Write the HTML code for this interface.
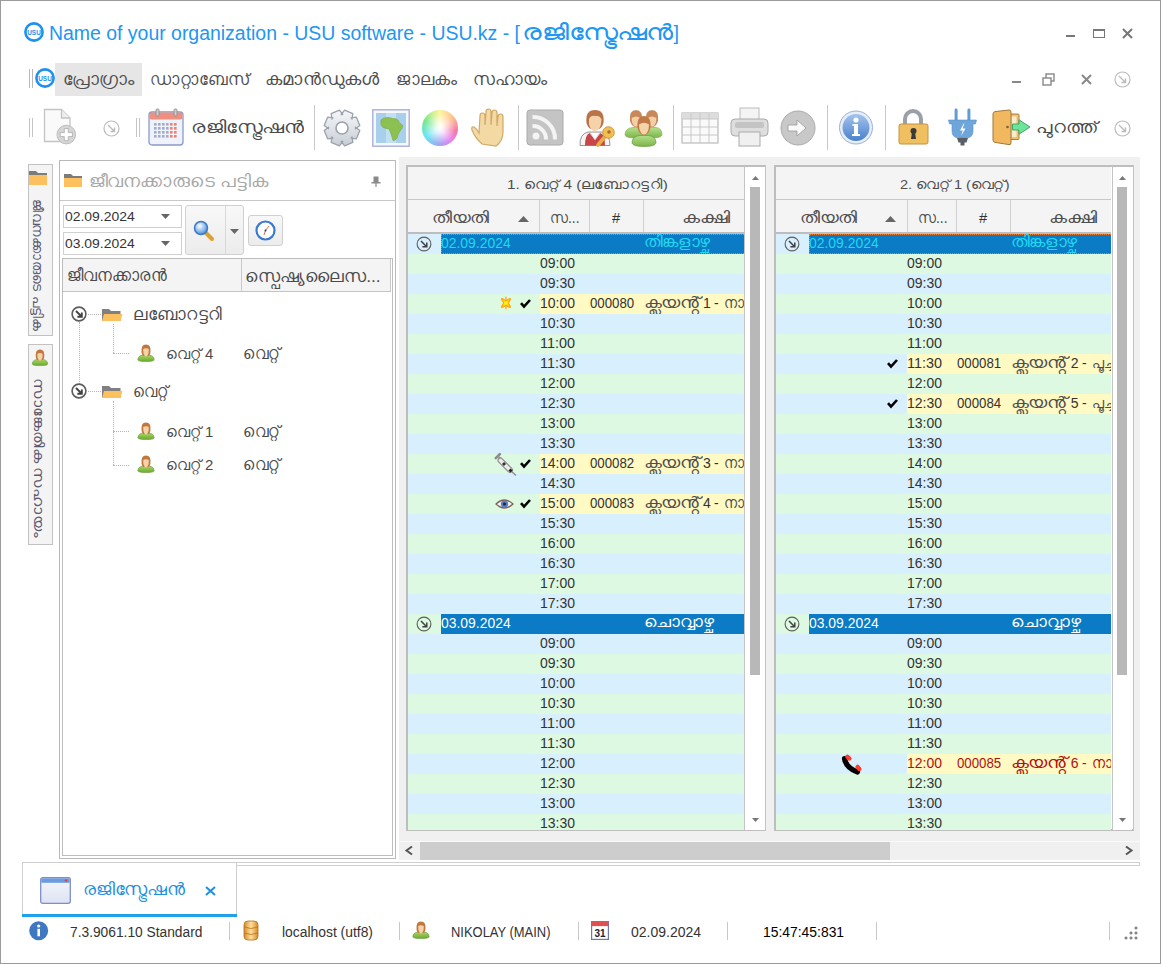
<!DOCTYPE html>
<html><head><meta charset="utf-8"><title>USU</title>
<style>
html,body{margin:0;padding:0;width:1161px;height:964px;overflow:hidden;background:#fff}
body{position:relative;font-family:'Liberation Sans',sans-serif;color:#222}
svg{overflow:visible}
</style></head><body>
<div style="position:absolute;left:0px;top:0px;width:1159px;height:962px;border:1px solid #9b9b9b;background:#fff"></div><svg style="position:absolute;left:24px;top:22px" width="20" height="20" viewBox="0 0 20 20"><circle cx="10" cy="10" r="8.6" fill="#fff" stroke="#1e90f0" stroke-width="2.6"/><text x="3.2" y="12.7" font-family="Liberation Sans" font-weight="bold" font-size="7.6" fill="#1e90f0" textLength="13.6" lengthAdjust="spacingAndGlyphs">USU</text></svg><div style="position:absolute;left:49px;top:23.07px;font-size:20px;line-height:20px;white-space:nowrap;color:#2196f3;transform:scale(0.9719,1.0);transform-origin:0 16.93px;">Name of your organization - USU software - USU.kz - [</div><div style="position:absolute;left:522px;top:23.92px;font-size:19px;line-height:19px;white-space:nowrap;color:#2196f3;transform:scale(1.4112,1.14);transform-origin:0 16.08px;">രജിസ്ട്രേഷൻ</div><div style="position:absolute;left:673.5px;top:23.07px;font-size:20px;line-height:20px;white-space:nowrap;color:#2196f3;">]</div><div style="position:absolute;left:1066px;top:35px;width:9px;height:2px;background:#777"></div><div style="position:absolute;left:1093px;top:29px;width:12px;height:9px;border:1.5px solid #777;border-top-width:2px;box-sizing:border-box"></div><svg style="position:absolute;left:1122px;top:28px" width="11" height="11" viewBox="0 0 11 11"><path d="M1 1L10 10M10 1L1 10" stroke="#777" stroke-width="2"/></svg><div style="position:absolute;left:29px;top:69px;width:1px;height:19px;background:#b8b8b8"></div><div style="position:absolute;left:32px;top:69px;width:1px;height:19px;background:#b8b8b8"></div><svg style="position:absolute;left:35px;top:68px" width="20" height="20" viewBox="0 0 20 20"><circle cx="10" cy="10" r="8.6" fill="#fff" stroke="#1e90f0" stroke-width="2.6"/><text x="3.2" y="12.7" font-family="Liberation Sans" font-weight="bold" font-size="7.6" fill="#1e90f0" textLength="13.6" lengthAdjust="spacingAndGlyphs">USU</text></svg><div style="position:absolute;left:55px;top:63px;width:87px;height:33px;background:#e6e6e6"></div><div style="position:absolute;left:63.4px;top:72.30px;font-size:15px;line-height:15px;white-space:nowrap;color:#4e4e4e;transform:scale(1.1672,1.14);transform-origin:0 12.70px;">പ്രോഗ്രാം</div><div style="position:absolute;left:149.9px;top:72.30px;font-size:15px;line-height:15px;white-space:nowrap;color:#4e4e4e;transform:scale(1.0934,1.14);transform-origin:0 12.70px;">ഡാറ്റാബേസ്</div><div style="position:absolute;left:264.9px;top:72.30px;font-size:15px;line-height:15px;white-space:nowrap;color:#4e4e4e;transform:scale(1.2117,1.14);transform-origin:0 12.70px;">കമാൻഡുകൾ</div><div style="position:absolute;left:395.6px;top:72.30px;font-size:15px;line-height:15px;white-space:nowrap;color:#4e4e4e;transform:scale(1.1241,1.14);transform-origin:0 12.70px;">ജാലകം</div><div style="position:absolute;left:472.6px;top:72.30px;font-size:15px;line-height:15px;white-space:nowrap;color:#4e4e4e;transform:scale(1.1415,1.14);transform-origin:0 12.70px;">സഹായം</div><div style="position:absolute;left:1012px;top:81px;width:9px;height:2px;background:#888"></div><svg style="position:absolute;left:1042px;top:73px" width="14" height="13" viewBox="0 0 14 13"><rect x="4" y="1" width="8" height="7" fill="none" stroke="#888" stroke-width="1.4"/><rect x="1" y="5" width="8" height="7" fill="#fff" stroke="#888" stroke-width="1.4"/></svg><svg style="position:absolute;left:1081px;top:74px" width="11" height="11" viewBox="0 0 11 11"><path d="M1 1L10 10M10 1L1 10" stroke="#888" stroke-width="2"/></svg><svg style="position:absolute;left:1114px;top:71px" width="17" height="17" viewBox="0 0 17 17"><circle cx="8.5" cy="8.5" r="7.5" fill="none" stroke="#bbb" stroke-width="1.2"/><path d="M5.0 5.0L11.5 11.5M11.5 7.5L11.5 11.5L7.5 11.5" fill="none" stroke="#bbb" stroke-width="1.4"/></svg><div style="position:absolute;left:29px;top:118px;width:1px;height:19px;background:#c4c4c4"></div><div style="position:absolute;left:32px;top:118px;width:1px;height:19px;background:#c4c4c4"></div><svg style="position:absolute;left:43px;top:108px" width="34" height="38" viewBox="0 0 34 38"><path d="M1.5 1.5H18.5L27 10V33.5H1.5Z" fill="#fafafa" stroke="#c4c4c4" stroke-width="1.3"/><path d="M18.5 1.5V10H27" fill="#eee" stroke="#c4c4c4" stroke-width="1.3"/><circle cx="23.3" cy="26.6" r="9.3" fill="#d6d6d6" stroke="#bdbdbd" stroke-width="1"/><path d="M21.3 20.5H25.3V24.6H29.4V28.6H25.3V32.7H21.3V28.6H17.2V24.6H21.3Z" fill="#fff" stroke="#aaa" stroke-width=".8"/></svg><svg style="position:absolute;left:103px;top:120px" width="17" height="17" viewBox="0 0 17 17"><circle cx="8.5" cy="8.5" r="7.5" fill="none" stroke="#bbb" stroke-width="1.2"/><path d="M5.0 5.0L11.5 11.5M11.5 7.5L11.5 11.5L7.5 11.5" fill="none" stroke="#bbb" stroke-width="1.4"/></svg><div style="position:absolute;left:136px;top:118px;width:1px;height:19px;background:#c4c4c4"></div><div style="position:absolute;left:139px;top:118px;width:1px;height:19px;background:#c4c4c4"></div><svg style="position:absolute;left:148px;top:109px" width="36" height="37" viewBox="0 0 36 37"><rect x="1" y="3" width="34" height="33" rx="3" fill="#eef2fa" stroke="#8b9bc8" stroke-width="1.3"/><rect x="1.5" y="3.5" width="33" height="7" rx="2" fill="#ef8f7f"/><rect x="8" y="0" width="3" height="7" rx="1" fill="#ccc" stroke="#888" stroke-width=".8"/><rect x="26" y="0" width="3" height="7" rx="1" fill="#ccc" stroke="#888" stroke-width=".8"/><rect x="6" y="14" width="2.6" height="2.6" fill="#a4acc8"/><rect x="10" y="14" width="2.6" height="2.6" fill="#a4acc8"/><rect x="14" y="14" width="2.6" height="2.6" fill="#a4acc8"/><rect x="18" y="14" width="2.6" height="2.6" fill="#a4acc8"/><rect x="22" y="14" width="2.6" height="2.6" fill="#f08070"/><rect x="26" y="14" width="2.6" height="2.6" fill="#f08070"/><rect x="6" y="18" width="2.6" height="2.6" fill="#a4acc8"/><rect x="10" y="18" width="2.6" height="2.6" fill="#a4acc8"/><rect x="14" y="18" width="2.6" height="2.6" fill="#a4acc8"/><rect x="18" y="18" width="2.6" height="2.6" fill="#a4acc8"/><rect x="22" y="18" width="2.6" height="2.6" fill="#f08070"/><rect x="26" y="18" width="2.6" height="2.6" fill="#f08070"/><rect x="6" y="22" width="2.6" height="2.6" fill="#a4acc8"/><rect x="10" y="22" width="2.6" height="2.6" fill="#a4acc8"/><rect x="14" y="22" width="2.6" height="2.6" fill="#a4acc8"/><rect x="18" y="22" width="2.6" height="2.6" fill="#a4acc8"/><rect x="22" y="22" width="2.6" height="2.6" fill="#f08070"/><rect x="26" y="22" width="2.6" height="2.6" fill="#f08070"/><rect x="6" y="26" width="2.6" height="2.6" fill="#a4acc8"/><rect x="10" y="26" width="2.6" height="2.6" fill="#a4acc8"/><rect x="14" y="26" width="2.6" height="2.6" fill="#a4acc8"/><rect x="18" y="26" width="2.6" height="2.6" fill="#a4acc8"/><rect x="22" y="26" width="2.6" height="2.6" fill="#f08070"/><rect x="26" y="26" width="2.6" height="2.6" fill="#f08070"/></svg><div style="position:absolute;left:191.2px;top:119.80px;font-size:15px;line-height:15px;white-space:nowrap;color:#4a4a4a;transform:scale(1.3452,1.14);transform-origin:0 12.70px;">രജിസ്ട്രേഷൻ</div><div style="position:absolute;left:314px;top:105px;width:1px;height:45px;background:#c8c8c8"></div><svg style="position:absolute;left:323px;top:109px" width="38" height="38" viewBox="0 0 38 38"><defs><linearGradient id="gg" x1="0" y1="0" x2="0" y2="1"><stop offset="0" stop-color="#f6f7f9"/><stop offset="1" stop-color="#c9ced6"/></linearGradient></defs><polygon points="32.5,18.2 36.8,21.6 33.4,29.8 28.0,29.1 29.1,28.0 29.8,33.4 21.6,36.8 18.2,32.5 19.8,32.5 16.4,36.8 8.2,33.4 8.9,28.0 10.0,29.1 4.6,29.8 1.2,21.6 5.5,18.2 5.5,19.8 1.2,16.4 4.6,8.2 10.0,8.9 8.9,10.0 8.2,4.6 16.4,1.2 19.8,5.5 18.2,5.5 21.6,1.2 29.8,4.6 29.1,10.0 28.0,8.9 33.4,8.2 36.8,16.4 32.5,19.8" fill="url(#gg)" stroke="#9aa2ac" stroke-width="1.3" stroke-linejoin="round"/><circle cx="19" cy="19" r="6" fill="#fff" stroke="#9aa2ac" stroke-width="1.6"/></svg><svg style="position:absolute;left:372px;top:109px" width="38" height="38" viewBox="0 0 38 38"><rect x="0.8" y="0.8" width="36.4" height="36.4" fill="#f6f8fc" stroke="#a8b0dc" stroke-width="1.4"/><rect x="4" y="4" width="30" height="30" fill="#a8d0ec"/><rect x="14" y="4" width="10" height="30" fill="#c8e4f4" opacity=".8"/><path d="M9 11 Q12 8 16 8.5 L19 9 Q21 10 23 9.5 L26 11 Q27 14 29 15 L31 17 Q30 20 28 22 Q26 25 25 29 Q23 32 21 31.5 Q20 28 19 25 Q18 22 17 20 Q14 19.5 11 18.5 Q8 16 9 11Z" fill="#8cc050" stroke="#78a840" stroke-width=".6"/></svg><div style="position:absolute;left:422px;top:110px;width:36px;height:36px;border-radius:50%;background:conic-gradient(from 0deg,#fff080,#ffb070 50deg,#f05090 100deg,#e060f0 140deg,#8090f0 185deg,#40e0f0 240deg,#50e070 295deg,#c0f070 335deg,#fff080)"></div><div style="position:absolute;left:422px;top:110px;width:36px;height:36px;border-radius:50%;background:radial-gradient(circle at 50% 50%,#fff 0,rgba(255,255,255,.85) 18%,rgba(255,255,255,.25) 60%,rgba(255,255,255,0) 100%)"></div><svg style="position:absolute;left:469px;top:108px" width="37" height="40" viewBox="0 0 37 40"><path d="M13 36 Q6 30 3 22 Q2 18 5 19 Q8 21 10 25 L11 8 Q11 5 13.5 5 Q16 5 16 8 L16 17 L17 4 Q17 1 19.5 1 Q22 1 22 4 L22 17 L23 5 Q23 2 25.5 2 Q28 2 28 5 L28 18 L29 9 Q29 6 31.5 6 Q34 6 34 9 L34 24 Q34 33 27 38 Z" fill="#f3d9a4" stroke="#d2a964" stroke-width="1.2"/></svg><div style="position:absolute;left:518px;top:105px;width:1px;height:45px;background:#c8c8c8"></div><svg style="position:absolute;left:526px;top:109px" width="38" height="37" viewBox="0 0 38 37"><rect x="1" y="1" width="36" height="35" rx="3" fill="#c4c4c4" stroke="#aaa"/><circle cx="10" cy="27" r="3.5" fill="#f4f4f4"/><path d="M6.5 17 A13 13 0 0 1 20 30.5" fill="none" stroke="#f4f4f4" stroke-width="4"/><path d="M6.5 8 A22 22 0 0 1 29 30.5" fill="none" stroke="#f4f4f4" stroke-width="4"/></svg><svg style="position:absolute;left:577px;top:107px" width="38" height="41" viewBox="0 0 38 41"><path d="M3 38.5 Q2.5 27 11 25 L25 25 Q33 27 33 38.5Z" fill="#f4f4f4" stroke="#8a8a8a" stroke-width=".9"/><path d="M8 38.5 Q8 28 12.5 26 L18 33 L23.5 26 Q28 28 28 38.5Z" fill="#c8454a"/><path d="M13 25.5 L18 33 L23 25.5Z" fill="#fff" stroke="#aaa" stroke-width=".5"/><path d="M9.5 16 Q8 3 18 3 Q28 3 26.5 16 Q25 21 22 22 L14 22 Q11 21 9.5 16Z" fill="#b87448"/><path d="M12 12 Q14 8 18 9 Q22 8 24.5 12 L24 17 Q22.5 24 18 24 Q13.5 24 12 17Z" fill="#f6d2aa"/><path d="M31 26 L21 38" stroke="#e8b040" stroke-width="3.6" stroke-linecap="round"/><circle cx="31.5" cy="25.5" r="5.8" fill="#f2c050" stroke="#c08a2a" stroke-width=".8"/><circle cx="32" cy="25" r="1.8" fill="#a07040"/></svg><svg style="position:absolute;left:624px;top:107px" width="39" height="41" viewBox="0 0 39 41"><defs><linearGradient id="grg" x1="0" y1="0" x2="0" y2="1"><stop offset="0" stop-color="#b4e088"/><stop offset="1" stop-color="#7cb44c"/></linearGradient></defs><path d="M1 28 Q1 21 9 20.5 L15 20.5 Q21 21 21 28 Q20 31 11 31 Q2 31 1 28Z" fill="url(#grg)" stroke="#7aa850" stroke-width=".6"/><path d="M18 28 Q18 21 26 20.5 L32 20.5 Q38 21 38 28 Q37 31 28 31 Q19 31 18 28Z" fill="url(#grg)" stroke="#7aa850" stroke-width=".6"/><path d="M6 14 Q5 3 12 3 Q19 3 18 14 Q16 20 12 20 Q8 20 6 14Z" fill="#c88858"/><path d="M7.6 11 Q12 8 16.4 11 L16 15 Q14.5 19.5 12 19.5 Q9.5 19.5 8 15Z" fill="#f4cfa6"/><path d="M22 14 Q21 3 28 3 Q35 3 34 14 Q32 20 28 20 Q24 20 22 14Z" fill="#c88858"/><path d="M23.6 11 Q28 8 32.4 11 L32 15 Q30.5 19.5 28 19.5 Q25.5 19.5 24 15Z" fill="#f4cfa6"/><path d="M8 36 Q8 29 16 28.5 L24 28.5 Q32 29 32 36 Q31 39.5 20 39.5 Q9 39.5 8 36Z" fill="url(#grg)" stroke="#6a9a40" stroke-width=".7"/><path d="M13.5 21 Q12.5 9 20 9 Q27.5 9 26.5 21 Q24.5 28 20 28 Q15.5 28 13.5 21Z" fill="#c07a48"/><path d="M15 17.5 Q20 14 25 17.5 L24.6 22 Q23 27.5 20 27.5 Q17 27.5 15.4 22Z" fill="#f6d2aa"/></svg><div style="position:absolute;left:673px;top:105px;width:1px;height:45px;background:#c8c8c8"></div><svg style="position:absolute;left:681px;top:112px" width="38" height="32" viewBox="0 0 38 32"><rect x="1" y="1" width="36" height="30" fill="#fafafa" stroke="#bbb" stroke-width="1.2"/><rect x="1" y="1" width="36" height="6" fill="#ddd"/><path d="M10 1V31" stroke="#c8c8c8"/><path d="M19 1V31" stroke="#c8c8c8"/><path d="M28 1V31" stroke="#c8c8c8"/><path d="M1 7H37" stroke="#c8c8c8"/><path d="M1 15H37" stroke="#c8c8c8"/><path d="M1 23H37" stroke="#c8c8c8"/></svg><svg style="position:absolute;left:730px;top:107px" width="39" height="40" viewBox="0 0 39 40"><rect x="10" y="1" width="19" height="12" fill="#f4f4f4" stroke="#bbb"/><rect x="1" y="12" width="37" height="17" rx="4" fill="#dedede" stroke="#aaa"/><rect x="5" y="15" width="29" height="6" rx="2" fill="#c4c4c4"/><rect x="9" y="25" width="21" height="14" fill="#f0f0f0" stroke="#aaa"/></svg><svg style="position:absolute;left:780px;top:110px" width="36" height="36" viewBox="0 0 36 36"><circle cx="18" cy="18" r="17" fill="#c8c8c8" stroke="#aaa"/><path d="M8 15H17V10L26 18L17 26V21H8Z" fill="#fafafa" stroke="#999" stroke-width=".8"/></svg><div style="position:absolute;left:827px;top:105px;width:1px;height:45px;background:#c8c8c8"></div><svg style="position:absolute;left:838px;top:110px" width="36" height="35" viewBox="0 0 36 35"><defs><linearGradient id="ig" x1="0" y1="0" x2="0" y2="1"><stop offset="0" stop-color="#a4c4ec"/><stop offset="1" stop-color="#4a80cc"/></linearGradient></defs><circle cx="18" cy="17.5" r="16.5" fill="#e8eef8" stroke="#9ab0d8" stroke-width="1"/><circle cx="18" cy="17.5" r="13.5" fill="url(#ig)"/><circle cx="18" cy="10" r="2.6" fill="#fff"/><path d="M14.5 14H20V24H22V26H14V24H16V16H14.5Z" fill="#fff"/></svg><div style="position:absolute;left:885px;top:105px;width:1px;height:45px;background:#c8c8c8"></div><svg style="position:absolute;left:898px;top:108px" width="31" height="37" viewBox="0 0 31 37"><path d="M7 17 V11 A8 8 0 0 1 23 11 V17" fill="none" stroke="#9aa0a8" stroke-width="4"/><rect x="1" y="16" width="29" height="20" rx="2" fill="#f0c060" stroke="#c89040" stroke-width="1"/><circle cx="15.5" cy="23" r="3" fill="#3a3a3a"/><path d="M14 24 L13 31 H18 L17 24Z" fill="#3a3a3a"/></svg><svg style="position:absolute;left:948px;top:108px" width="29" height="38" viewBox="0 0 29 38"><rect x="6.6" y="0.5" width="3" height="13" rx="1.4" fill="#5f9dd6"/><rect x="19.4" y="0.5" width="3" height="13" rx="1.4" fill="#5f9dd6"/><path d="M0.5 12 H28.5 L27.5 16 H25 V23 Q25 30 18 30 H11 Q4 30 4 23 V16 H1.5Z" fill="#6ea6da" stroke="#5a90c8" stroke-width=".6"/><path d="M15.8 15.5 L12 22.5 H14.8 L13 28 L17.5 20.5 H14.6 L16.4 15.5Z" fill="#fff"/><path d="M9 30 H20 L18.5 34.5 H10.5Z" fill="#5a5f66"/><rect x="12.5" y="34" width="4" height="3.5" fill="#5a5f66"/></svg><svg style="position:absolute;left:992px;top:109px" width="39" height="37" viewBox="0 0 39 37"><rect x="17" y="5" width="10" height="25.5" rx="1" fill="#f0c070" stroke="#a8803a" stroke-width="1"/><rect x="19.5" y="7.5" width="5" height="20.5" fill="#f8ecd0"/><path d="M1 5 Q1 3 3 2.6 L17 1 Q19 1 19 3 V34 Q19 36 17 35.6 L3 33.4 Q1 33 1 31Z" fill="#f2b860" stroke="#a07838" stroke-width="1"/><circle cx="15.5" cy="18" r="1.3" fill="#806030"/><path d="M20.5 15 H27 V10.8 L38 18 L27 25.2 V21 H20.5Z" fill="#6ee39a" stroke="#3ea868" stroke-width="1"/></svg><div style="position:absolute;left:1036.3px;top:120.30px;font-size:15px;line-height:15px;white-space:nowrap;color:#4a4a4a;transform:scale(1.2854,1.14);transform-origin:0 12.70px;">പുറത്ത്</div><svg style="position:absolute;left:1114px;top:120px" width="17" height="17" viewBox="0 0 17 17"><circle cx="8.5" cy="8.5" r="7.5" fill="none" stroke="#bbb" stroke-width="1.2"/><path d="M5.0 5.0L11.5 11.5M11.5 7.5L11.5 11.5L7.5 11.5" fill="none" stroke="#bbb" stroke-width="1.4"/></svg><div style="position:absolute;left:398.6px;top:157.4px;width:741.4px;height:702.7px;background:#f0f0f0"></div><div style="position:absolute;left:27.9px;top:164.2px;width:25.4px;height:172.3px;background:#f4f4f4;border:1px solid #c2c2c2;box-sizing:border-box"></div><svg style="position:absolute;left:28.5px;top:171px" width="18" height="14" viewBox="0 0 18 14"><path d="M0 0 H7 L9 2 H18 V4 H0Z" fill="#7b7b7b"/><rect x="0" y="4" width="18" height="10" fill="#fcc15e"/></svg><div style="position:absolute;left:27.9px;top:344.3px;width:25.4px;height:200.5px;background:#f4f4f4;border:1px solid #c2c2c2;box-sizing:border-box"></div><svg style="position:absolute;left:31px;top:349px" width="18" height="17" viewBox="0 0 18 17"><svg viewBox="0 0 18 18" width="18" height="17"><defs><linearGradient id="pb" x1="0" y1="0" x2="0" y2="1"><stop offset="0" stop-color="#a8d860"/><stop offset="1" stop-color="#6aa830"/></linearGradient></defs><path d="M0.8 15.8 Q1 11.6 6 11 L12 11 Q17 11.6 17.2 15.8 Q17 17.6 9 17.6 Q1 17.6 0.8 15.8Z" fill="url(#pb)" stroke="#5a8a30" stroke-width=".5"/><path d="M4.6 9 Q3.6 0.6 9 0.6 Q14.4 0.6 13.4 9 Q12.6 11.6 11.5 12 L6.5 12 Q5.4 11.6 4.6 9Z" fill="#c0783f"/><path d="M6.2 5 Q9 3.6 11.8 5 L11.6 9 Q10.6 12.4 9 12.4 Q7.4 12.4 6.4 9Z" fill="#f6d2a8"/></svg></svg><div style="position:absolute;left:59.1px;top:160.2px;width:336.9px;height:698.8px;border:1px solid #b9b9b9;box-sizing:border-box;background:#fff"></div><div style="position:absolute;left:60px;top:199.6px;width:335px;height:1px;background:#c8c8c8"></div><svg style="position:absolute;left:63.7px;top:174px" width="18" height="13" viewBox="0 0 18 13"><path d="M0 0 H7 L9 2 H18 V4 H0Z" fill="#7b7b7b"/><rect x="0" y="4" width="18" height="9" fill="#fcc15e"/></svg><div style="position:absolute;left:89px;top:174.30px;font-size:15px;line-height:15px;white-space:nowrap;color:#a8a8a8;transform:scale(1.2225,1.14);transform-origin:0 12.70px;">ജീവനക്കാരുടെ പട്ടിക</div><svg style="position:absolute;left:371px;top:176px" width="10" height="11" viewBox="0 0 10 11"><path d="M2.5 0.5 H7.5 V6 H9.5 V7.5 H5.6 V11 H4.4 V7.5 H0.5 V6 H2.5Z" fill="#8a8a8a"/></svg><div style="position:absolute;left:62.9px;top:205.3px;width:119px;height:23px;border:1px solid #d0d0d0;box-sizing:border-box;background:#fff"></div><svg style="position:absolute;left:161px;top:214.3px" width="9" height="5" viewBox="0 0 9 5"><path d="M0 0H9L4.5 5Z" fill="#666"/></svg><div style="position:absolute;left:62.9px;top:231.7px;width:119px;height:23px;border:1px solid #d0d0d0;box-sizing:border-box;background:#fff"></div><svg style="position:absolute;left:161px;top:240.7px" width="9" height="5" viewBox="0 0 9 5"><path d="M0 0H9L4.5 5Z" fill="#666"/></svg><div style="position:absolute;left:65px;top:210.30px;font-size:13px;line-height:13px;white-space:nowrap;color:#333;transform:scale(1.0710,1.0);transform-origin:0 11.00px;">02.09.2024</div><div style="position:absolute;left:65px;top:236.90px;font-size:13px;line-height:13px;white-space:nowrap;color:#333;transform:scale(1.0710,1.0);transform-origin:0 11.00px;">03.09.2024</div><div style="position:absolute;left:184.5px;top:204.6px;width:59px;height:50.5px;border:1px solid #d0d0d0;border-radius:3px;box-sizing:border-box;background:linear-gradient(#f8f8f8,#ececec)"></div><div style="position:absolute;left:224.5px;top:205.6px;width:1px;height:48.5px;background:#d8d8d8"></div><svg style="position:absolute;left:193px;top:220px" width="22" height="21" viewBox="0 0 22 21"><defs><radialGradient id="mg" cx=".4" cy=".35" r=".6"><stop offset="0" stop-color="#fff"/><stop offset="1" stop-color="#5b9be0"/></radialGradient></defs><path d="M12 12 L19 19" stroke="#e0a030" stroke-width="4" stroke-linecap="round"/><circle cx="8" cy="8" r="6.5" fill="url(#mg)" stroke="#3d7ac8" stroke-width="1.5"/></svg><svg style="position:absolute;left:229.6px;top:228.8px" width="9" height="5" viewBox="0 0 9 5"><path d="M0 0H9L4.5 5Z" fill="#666"/></svg><div style="position:absolute;left:247.9px;top:215.4px;width:35.6px;height:30.6px;border:1px solid #d0d0d0;border-radius:3px;box-sizing:border-box;background:linear-gradient(#f8f8f8,#ececec)"></div><svg style="position:absolute;left:255px;top:220px" width="21" height="21" viewBox="0 0 21 21"><circle cx="10.5" cy="10.5" r="9" fill="#fff" stroke="#3b78d0" stroke-width="2.2"/><path d="M10.5 10.5 L14 6 M10.5 10.5 L9 15" stroke="#e07050" stroke-width="1"/><circle cx="10.5" cy="10.5" r="1" fill="#336"/></svg><div style="position:absolute;left:62px;top:258px;width:331px;height:598px;border:1px solid #bdbdbd;box-sizing:border-box;background:#fff"></div><div style="position:absolute;left:63px;top:259px;width:328px;height:33px;background:#f4f4f4;border-bottom:1px solid #c4c4c4;box-sizing:border-box"></div><div style="position:absolute;left:240.7px;top:259px;width:1px;height:32.6px;background:#c8c8c8"></div><div style="position:absolute;left:390px;top:259px;width:1px;height:33px;background:#c8c8c8"></div><div style="position:absolute;left:66.7px;top:268.30px;font-size:15px;line-height:15px;white-space:nowrap;color:#4a4a4a;transform:scale(1.0628,1.14);transform-origin:0 12.70px;">ജീവനക്കാരൻ</div><div style="position:absolute;left:245.3px;top:269.00px;font-size:15px;line-height:15px;white-space:nowrap;color:#4a4a4a;transform:scale(1.1547,1.14);transform-origin:0 12.70px;">സ്പെഷ്യലൈസ...</div><div style="position:absolute;left:79px;top:322px;width:0px;height:62px;border-left:1px dotted #b4b4b4;"></div><div style="position:absolute;left:87.5px;top:314px;width:13px;height:0px;border-top:1px dotted #b4b4b4;"></div><div style="position:absolute;left:87.5px;top:391px;width:13px;height:0px;border-top:1px dotted #b4b4b4;"></div><div style="position:absolute;left:112.7px;top:324px;width:0px;height:29px;border-left:1px dotted #b4b4b4;"></div><div style="position:absolute;left:113px;top:353px;width:16px;height:0px;border-top:1px dotted #b4b4b4;"></div><div style="position:absolute;left:112.7px;top:401px;width:0px;height:64px;border-left:1px dotted #b4b4b4;"></div><div style="position:absolute;left:113px;top:431px;width:16px;height:0px;border-top:1px dotted #b4b4b4;"></div><div style="position:absolute;left:113px;top:464.5px;width:16px;height:0px;border-top:1px dotted #b4b4b4;"></div><svg style="position:absolute;left:71.2px;top:306.3px" width="16" height="16" viewBox="0 0 16 16"><circle cx="8" cy="8" r="6.9" fill="#fff" stroke="#5c5c5c" stroke-width="1.6"/><path d="M5 5L10.2 10.2M10.8 6.4V10.8H6.4" fill="none" stroke="#404040" stroke-width="1.9"/></svg><svg style="position:absolute;left:71.2px;top:383.2px" width="16" height="16" viewBox="0 0 16 16"><circle cx="8" cy="8" r="6.9" fill="#fff" stroke="#5c5c5c" stroke-width="1.6"/><path d="M5 5L10.2 10.2M10.8 6.4V10.8H6.4" fill="none" stroke="#404040" stroke-width="1.9"/></svg><svg style="position:absolute;left:102.4px;top:308px" width="20.5" height="13" viewBox="0 0 20.5 13"><path d="M0 1 H7 L9 3 H18.5 V13 H0Z" fill="#808080"/><path d="M2 6 H20.5 L18.5 13 H0Z" fill="#fcc15e"/></svg><svg style="position:absolute;left:102.4px;top:385px" width="20.5" height="13" viewBox="0 0 20.5 13"><path d="M0 1 H7 L9 3 H18.5 V13 H0Z" fill="#808080"/><path d="M2 6 H20.5 L18.5 13 H0Z" fill="#fcc15e"/></svg><div style="position:absolute;left:132.5px;top:307.30px;font-size:15px;line-height:15px;white-space:nowrap;color:#4a4a4a;transform:scale(1.1321,1.14);transform-origin:0 12.70px;">ലബോറട്ടറി</div><div style="position:absolute;left:132.5px;top:384.30px;font-size:15px;line-height:15px;white-space:nowrap;color:#4a4a4a;transform:scale(1.0143,1.14);transform-origin:0 12.70px;">വെറ്റ്</div><svg style="position:absolute;left:137px;top:344.0px" width="18" height="18" viewBox="0 0 18 18"><svg viewBox="0 0 18 18" width="18" height="18"><defs><linearGradient id="pb" x1="0" y1="0" x2="0" y2="1"><stop offset="0" stop-color="#a8d860"/><stop offset="1" stop-color="#6aa830"/></linearGradient></defs><path d="M0.8 15.8 Q1 11.6 6 11 L12 11 Q17 11.6 17.2 15.8 Q17 17.6 9 17.6 Q1 17.6 0.8 15.8Z" fill="url(#pb)" stroke="#5a8a30" stroke-width=".5"/><path d="M4.6 9 Q3.6 0.6 9 0.6 Q14.4 0.6 13.4 9 Q12.6 11.6 11.5 12 L6.5 12 Q5.4 11.6 4.6 9Z" fill="#c0783f"/><path d="M6.2 5 Q9 3.6 11.8 5 L11.6 9 Q10.6 12.4 9 12.4 Q7.4 12.4 6.4 9Z" fill="#f6d2a8"/></svg></svg><div style="position:absolute;left:166px;top:346.20px;font-size:15px;line-height:15px;white-space:nowrap;color:#4a4a4a;transform:scale(0.9955,1.0);transform-origin:0 12.70px;">വെറ്റ് 4</div><div style="position:absolute;left:243.4px;top:346.20px;font-size:15px;line-height:15px;white-space:nowrap;color:#4a4a4a;transform:scale(1.0457,1.14);transform-origin:0 12.70px;">വെറ്റ്</div><svg style="position:absolute;left:137px;top:421.5px" width="18" height="18" viewBox="0 0 18 18"><svg viewBox="0 0 18 18" width="18" height="18"><defs><linearGradient id="pb" x1="0" y1="0" x2="0" y2="1"><stop offset="0" stop-color="#a8d860"/><stop offset="1" stop-color="#6aa830"/></linearGradient></defs><path d="M0.8 15.8 Q1 11.6 6 11 L12 11 Q17 11.6 17.2 15.8 Q17 17.6 9 17.6 Q1 17.6 0.8 15.8Z" fill="url(#pb)" stroke="#5a8a30" stroke-width=".5"/><path d="M4.6 9 Q3.6 0.6 9 0.6 Q14.4 0.6 13.4 9 Q12.6 11.6 11.5 12 L6.5 12 Q5.4 11.6 4.6 9Z" fill="#c0783f"/><path d="M6.2 5 Q9 3.6 11.8 5 L11.6 9 Q10.6 12.4 9 12.4 Q7.4 12.4 6.4 9Z" fill="#f6d2a8"/></svg></svg><div style="position:absolute;left:166px;top:423.70px;font-size:15px;line-height:15px;white-space:nowrap;color:#4a4a4a;transform:scale(0.9955,1.0);transform-origin:0 12.70px;">വെറ്റ് 1</div><div style="position:absolute;left:243.4px;top:423.70px;font-size:15px;line-height:15px;white-space:nowrap;color:#4a4a4a;transform:scale(1.0457,1.14);transform-origin:0 12.70px;">വെറ്റ്</div><svg style="position:absolute;left:137px;top:454.9px" width="18" height="18" viewBox="0 0 18 18"><svg viewBox="0 0 18 18" width="18" height="18"><defs><linearGradient id="pb" x1="0" y1="0" x2="0" y2="1"><stop offset="0" stop-color="#a8d860"/><stop offset="1" stop-color="#6aa830"/></linearGradient></defs><path d="M0.8 15.8 Q1 11.6 6 11 L12 11 Q17 11.6 17.2 15.8 Q17 17.6 9 17.6 Q1 17.6 0.8 15.8Z" fill="url(#pb)" stroke="#5a8a30" stroke-width=".5"/><path d="M4.6 9 Q3.6 0.6 9 0.6 Q14.4 0.6 13.4 9 Q12.6 11.6 11.5 12 L6.5 12 Q5.4 11.6 4.6 9Z" fill="#c0783f"/><path d="M6.2 5 Q9 3.6 11.8 5 L11.6 9 Q10.6 12.4 9 12.4 Q7.4 12.4 6.4 9Z" fill="#f6d2a8"/></svg></svg><div style="position:absolute;left:166px;top:457.10px;font-size:15px;line-height:15px;white-space:nowrap;color:#4a4a4a;transform:scale(0.9955,1.0);transform-origin:0 12.70px;">വെറ്റ് 2</div><div style="position:absolute;left:243.4px;top:457.10px;font-size:15px;line-height:15px;white-space:nowrap;color:#4a4a4a;transform:scale(1.0457,1.14);transform-origin:0 12.70px;">വെറ്റ്</div><div style="position:absolute;left:406.4px;top:165.3px;width:359.4px;height:666.2px;border:2px solid #bebebe;border-right:1px solid #c4c4c4;box-sizing:border-box;background:#fff"></div><div style="position:absolute;left:408.4px;top:167.3px;width:335.9px;height:31.7px;background:#f4f4f4"></div><div style="position:absolute;left:408.4px;top:199px;width:335.9px;height:1px;background:#c8c8c8"></div><div style="position:absolute;left:507px;top:177.60px;font-size:13px;line-height:13px;white-space:nowrap;color:#4e4e4e;transform:scale(1.1773,1.0);transform-origin:0 11.00px;">1. വെറ്റ് 4 (ലബോറട്ടറി)</div><div style="position:absolute;left:408.4px;top:200px;width:335.9px;height:32.5px;background:#f4f4f4"></div><div style="position:absolute;left:408.4px;top:232px;width:335.9px;height:1.5px;background:#bdbdbd"></div><div style="position:absolute;left:539.3px;top:200px;width:1px;height:32px;background:#d0d0d0"></div><div style="position:absolute;left:589.2px;top:200px;width:1px;height:32px;background:#d0d0d0"></div><div style="position:absolute;left:642.6px;top:200px;width:1px;height:32px;background:#d0d0d0"></div><div style="position:absolute;left:432.0px;top:211.25px;font-size:14px;line-height:14px;white-space:nowrap;color:#4e4e4e;transform:scale(1.3045,1.14);transform-origin:0 11.85px;">തീയതി</div><svg style="position:absolute;left:517.6px;top:216px" width="11" height="6" viewBox="0 0 11 6"><path d="M0 6H11L5.5 0Z" fill="#666"/></svg><div style="position:absolute;left:550.0px;top:211.25px;font-size:14px;line-height:14px;white-space:nowrap;color:#4e4e4e;transform:scale(0.9942,1.14);transform-origin:0 11.85px;">സ...</div><div style="position:absolute;left:611.5px;top:210.55px;font-size:14px;line-height:14px;white-space:nowrap;color:#333;transform:scale(1.0517,1.0);transform-origin:0 11.85px;">#</div><div style="position:absolute;left:681.8px;top:211.25px;font-size:14px;line-height:14px;white-space:nowrap;color:#4e4e4e;transform:scale(1.3472,1.14);transform-origin:0 11.85px;">കക്ഷി</div><div style="position:absolute;left:408.4px;top:233.5px;width:335.9px;height:596.9px;overflow:hidden"><div style="position:absolute;left:0;top:0px;width:335.9px;height:20.5px;background:#d8effd"></div><div style="position:absolute;left:32.6px;top:0px;width:305.29999999999995px;height:20.5px;background:#0a7bc4;outline:1px dotted #f08030;outline-offset:-1px;"></div><div style="position:absolute;left:0;top:20.5px;width:335.9px;height:20px;background:#ddf9e1"></div><div style="position:absolute;left:0;top:40.5px;width:335.9px;height:20px;background:#d8effd"></div><div style="position:absolute;left:0;top:60.5px;width:335.9px;height:20px;background:#ddf9e1"></div><div style="position:absolute;left:0;top:80.5px;width:335.9px;height:20px;background:#d8effd"></div><div style="position:absolute;left:0;top:100.5px;width:335.9px;height:20px;background:#ddf9e1"></div><div style="position:absolute;left:0;top:120.5px;width:335.9px;height:20px;background:#d8effd"></div><div style="position:absolute;left:0;top:140.5px;width:335.9px;height:20px;background:#ddf9e1"></div><div style="position:absolute;left:0;top:160.5px;width:335.9px;height:20px;background:#d8effd"></div><div style="position:absolute;left:0;top:180.5px;width:335.9px;height:20px;background:#ddf9e1"></div><div style="position:absolute;left:0;top:200.5px;width:335.9px;height:20px;background:#d8effd"></div><div style="position:absolute;left:0;top:220.5px;width:335.9px;height:20px;background:#ddf9e1"></div><div style="position:absolute;left:0;top:240.5px;width:335.9px;height:20px;background:#d8effd"></div><div style="position:absolute;left:0;top:260.5px;width:335.9px;height:20px;background:#ddf9e1"></div><div style="position:absolute;left:0;top:280.5px;width:335.9px;height:20px;background:#d8effd"></div><div style="position:absolute;left:0;top:300.5px;width:335.9px;height:20px;background:#ddf9e1"></div><div style="position:absolute;left:0;top:320.5px;width:335.9px;height:20px;background:#d8effd"></div><div style="position:absolute;left:0;top:340.5px;width:335.9px;height:20px;background:#ddf9e1"></div><div style="position:absolute;left:0;top:360.5px;width:335.9px;height:20px;background:#d8effd"></div><div style="position:absolute;left:0;top:380.5px;width:335.9px;height:20px;background:#ddf9e1"></div><div style="position:absolute;left:32.6px;top:380.5px;width:305.29999999999995px;height:20px;background:#0a7bc4;"></div><div style="position:absolute;left:0;top:400.5px;width:335.9px;height:20px;background:#d8effd"></div><div style="position:absolute;left:0;top:420.5px;width:335.9px;height:20px;background:#ddf9e1"></div><div style="position:absolute;left:0;top:440.5px;width:335.9px;height:20px;background:#d8effd"></div><div style="position:absolute;left:0;top:460.5px;width:335.9px;height:20px;background:#ddf9e1"></div><div style="position:absolute;left:0;top:480.5px;width:335.9px;height:20px;background:#d8effd"></div><div style="position:absolute;left:0;top:500.5px;width:335.9px;height:20px;background:#ddf9e1"></div><div style="position:absolute;left:0;top:520.5px;width:335.9px;height:20px;background:#d8effd"></div><div style="position:absolute;left:0;top:540.5px;width:335.9px;height:20px;background:#ddf9e1"></div><div style="position:absolute;left:0;top:560.5px;width:335.9px;height:20px;background:#d8effd"></div><div style="position:absolute;left:0;top:580.5px;width:335.9px;height:20px;background:#ddf9e1"></div></div><svg style="position:absolute;left:416.29999999999995px;top:235.5px" width="16" height="16" viewBox="0 0 16 16"><circle cx="8" cy="8" r="6.9" fill="none" stroke="#5c5c5c" stroke-width="1.1"/><path d="M5 5L10.2 10.2M10.8 6.4V10.8H6.4" fill="none" stroke="#404040" stroke-width="1.5"/></svg><div style="position:absolute;left:440.7px;top:235.65px;font-size:14px;line-height:14px;white-space:nowrap;color:#22d8f0;transform:scale(0.9946,1.0);transform-origin:0 11.85px;">02.09.2024</div><div style="position:absolute;left:643.6px;top:234.65px;font-size:14px;line-height:14px;white-space:nowrap;color:#22d8f0;transform:scale(1.2278,1.14);transform-origin:0 11.85px;">തിങ്കളാഴ്ച</div><div style="position:absolute;left:539.8px;top:255.85px;font-size:14px;line-height:14px;white-space:nowrap;color:#333;transform:scale(0.9987,1.0);transform-origin:0 11.85px;">09:00</div><div style="position:absolute;left:539.8px;top:275.85px;font-size:14px;line-height:14px;white-space:nowrap;color:#333;transform:scale(0.9987,1.0);transform-origin:0 11.85px;">09:30</div><div style="position:absolute;left:539.8px;top:294.0px;width:204.5px;height:20px;background:#fff9c4"></div><div style="position:absolute;left:589.7px;top:295.85px;font-size:14px;line-height:14px;white-space:nowrap;color:#333;transform:scale(0.9461,1.0);transform-origin:0 11.85px;">000080</div><div style="position:absolute;left:643.6px;top:294.0px;width:100.69999999999993px;height:20px;overflow:hidden"><div style="position:absolute;left:0px;top:1.85px;font-size:14px;line-height:14px;white-space:nowrap;color:#4e4e4e;transform:scale(1.3381,1.14);transform-origin:0 11.85px;">ക്ലയൻ്റ്</div><div style="position:absolute;left:59.3px;top:1.85px;font-size:14px;line-height:14px;white-space:nowrap;color:#333;">1</div><div style="position:absolute;left:70.5px;top:1.85px;font-size:14px;line-height:14px;white-space:nowrap;color:#333;">-</div><div style="position:absolute;left:80.2px;top:1.85px;font-size:14px;line-height:14px;white-space:nowrap;color:#4e4e4e;transform:scale(1.0000,1.14);transform-origin:0 11.85px;">നായ</div></div><svg style="position:absolute;left:519.6px;top:299.0px" width="11" height="9" viewBox="0 0 11 9"><path d="M1 4.2 L4 7.6 L10 1" fill="none" stroke="#000" stroke-width="2.6"/></svg><svg style="position:absolute;left:499.59999999999997px;top:297.2px" width="12" height="12" viewBox="0 0 12 12"><defs><radialGradient id="stg" cx=".5" cy=".5" r=".5"><stop offset="0" stop-color="#ffe800"/><stop offset=".55" stop-color="#ffc800"/><stop offset="1" stop-color="#ff9000"/></radialGradient></defs><ellipse cx="6" cy="6" rx="6.6" ry="2" transform="rotate(45 6 6)" fill="url(#stg)"/><ellipse cx="6" cy="6" rx="6.6" ry="2" transform="rotate(-45 6 6)" fill="url(#stg)"/><path d="M6 -0.2V12.2" stroke="#ff9a00" stroke-width="1.1"/><circle cx="6" cy="6" r="2" fill="#fff020"/></svg><div style="position:absolute;left:539.8px;top:295.85px;font-size:14px;line-height:14px;white-space:nowrap;color:#333;transform:scale(0.9987,1.0);transform-origin:0 11.85px;">10:00</div><div style="position:absolute;left:539.8px;top:315.85px;font-size:14px;line-height:14px;white-space:nowrap;color:#333;transform:scale(0.9987,1.0);transform-origin:0 11.85px;">10:30</div><div style="position:absolute;left:539.8px;top:335.85px;font-size:14px;line-height:14px;white-space:nowrap;color:#333;transform:scale(1.0294,1.0);transform-origin:0 11.85px;">11:00</div><div style="position:absolute;left:539.8px;top:355.85px;font-size:14px;line-height:14px;white-space:nowrap;color:#333;transform:scale(1.0294,1.0);transform-origin:0 11.85px;">11:30</div><div style="position:absolute;left:539.8px;top:375.85px;font-size:14px;line-height:14px;white-space:nowrap;color:#333;transform:scale(0.9987,1.0);transform-origin:0 11.85px;">12:00</div><div style="position:absolute;left:539.8px;top:395.85px;font-size:14px;line-height:14px;white-space:nowrap;color:#333;transform:scale(0.9987,1.0);transform-origin:0 11.85px;">12:30</div><div style="position:absolute;left:539.8px;top:415.85px;font-size:14px;line-height:14px;white-space:nowrap;color:#333;transform:scale(0.9987,1.0);transform-origin:0 11.85px;">13:00</div><div style="position:absolute;left:539.8px;top:435.85px;font-size:14px;line-height:14px;white-space:nowrap;color:#333;transform:scale(0.9987,1.0);transform-origin:0 11.85px;">13:30</div><div style="position:absolute;left:539.8px;top:454.0px;width:204.5px;height:20px;background:#fff9c4"></div><div style="position:absolute;left:589.7px;top:455.85px;font-size:14px;line-height:14px;white-space:nowrap;color:#333;transform:scale(0.9461,1.0);transform-origin:0 11.85px;">000082</div><div style="position:absolute;left:643.6px;top:454.0px;width:100.69999999999993px;height:20px;overflow:hidden"><div style="position:absolute;left:0px;top:1.85px;font-size:14px;line-height:14px;white-space:nowrap;color:#4e4e4e;transform:scale(1.3381,1.14);transform-origin:0 11.85px;">ക്ലയൻ്റ്</div><div style="position:absolute;left:59.3px;top:1.85px;font-size:14px;line-height:14px;white-space:nowrap;color:#333;">3</div><div style="position:absolute;left:70.5px;top:1.85px;font-size:14px;line-height:14px;white-space:nowrap;color:#333;">-</div><div style="position:absolute;left:80.2px;top:1.85px;font-size:14px;line-height:14px;white-space:nowrap;color:#4e4e4e;transform:scale(1.0000,1.14);transform-origin:0 11.85px;">നായ</div></div><svg style="position:absolute;left:519.6px;top:459.0px" width="11" height="9" viewBox="0 0 11 9"><path d="M1 4.2 L4 7.6 L10 1" fill="none" stroke="#000" stroke-width="2.6"/></svg><svg style="position:absolute;left:494.7px;top:453.5px" width="22" height="22" viewBox="0 0 22 22"><path d="M0.8 4.2 L4.8 0.2" stroke="#8a8a8a" stroke-width="2.6" stroke-linecap="round"/><path d="M2.8 2.2 L6 5.4" stroke="#9a9a9a" stroke-width="2.2"/><path d="M5.5 6.5 L15 16" stroke="#8c8c8c" stroke-width="6" stroke-linecap="round"/><path d="M5.5 6.5 L15 16" stroke="#ececec" stroke-width="3.6" stroke-linecap="round"/><path d="M8 9 L10 11" stroke="#333" stroke-width="3"/><path d="M15.5 16.5 L21 21.5" stroke="#8a8a8a" stroke-width="1.3"/><path d="M14.5 15.5 L16.5 17.5" stroke="#222" stroke-width="3"/></svg><div style="position:absolute;left:539.8px;top:455.85px;font-size:14px;line-height:14px;white-space:nowrap;color:#333;transform:scale(0.9987,1.0);transform-origin:0 11.85px;">14:00</div><div style="position:absolute;left:539.8px;top:475.85px;font-size:14px;line-height:14px;white-space:nowrap;color:#333;transform:scale(0.9987,1.0);transform-origin:0 11.85px;">14:30</div><div style="position:absolute;left:539.8px;top:494.0px;width:204.5px;height:20px;background:#fff9c4"></div><div style="position:absolute;left:589.7px;top:495.85px;font-size:14px;line-height:14px;white-space:nowrap;color:#333;transform:scale(0.9461,1.0);transform-origin:0 11.85px;">000083</div><div style="position:absolute;left:643.6px;top:494.0px;width:100.69999999999993px;height:20px;overflow:hidden"><div style="position:absolute;left:0px;top:1.85px;font-size:14px;line-height:14px;white-space:nowrap;color:#4e4e4e;transform:scale(1.3381,1.14);transform-origin:0 11.85px;">ക്ലയൻ്റ്</div><div style="position:absolute;left:59.3px;top:1.85px;font-size:14px;line-height:14px;white-space:nowrap;color:#333;">4</div><div style="position:absolute;left:70.5px;top:1.85px;font-size:14px;line-height:14px;white-space:nowrap;color:#333;">-</div><div style="position:absolute;left:80.2px;top:1.85px;font-size:14px;line-height:14px;white-space:nowrap;color:#4e4e4e;transform:scale(1.0000,1.14);transform-origin:0 11.85px;">നായ</div></div><svg style="position:absolute;left:519.6px;top:499.0px" width="11" height="9" viewBox="0 0 11 9"><path d="M1 4.2 L4 7.6 L10 1" fill="none" stroke="#000" stroke-width="2.6"/></svg><svg style="position:absolute;left:495.0px;top:498.0px" width="19" height="12" viewBox="0 0 19 12"><path d="M1 6 Q9.5 -2 18 6 Q9.5 14 1 6Z" fill="#eef2f8" stroke="#7a6050" stroke-width="1.2"/><circle cx="9.5" cy="6" r="3.6" fill="#5a7cc0"/><circle cx="9.5" cy="6" r="1.5" fill="#223"/></svg><div style="position:absolute;left:539.8px;top:495.85px;font-size:14px;line-height:14px;white-space:nowrap;color:#333;transform:scale(0.9987,1.0);transform-origin:0 11.85px;">15:00</div><div style="position:absolute;left:539.8px;top:515.85px;font-size:14px;line-height:14px;white-space:nowrap;color:#333;transform:scale(0.9987,1.0);transform-origin:0 11.85px;">15:30</div><div style="position:absolute;left:539.8px;top:535.85px;font-size:14px;line-height:14px;white-space:nowrap;color:#333;transform:scale(0.9987,1.0);transform-origin:0 11.85px;">16:00</div><div style="position:absolute;left:539.8px;top:555.85px;font-size:14px;line-height:14px;white-space:nowrap;color:#333;transform:scale(0.9987,1.0);transform-origin:0 11.85px;">16:30</div><div style="position:absolute;left:539.8px;top:575.85px;font-size:14px;line-height:14px;white-space:nowrap;color:#333;transform:scale(0.9987,1.0);transform-origin:0 11.85px;">17:00</div><div style="position:absolute;left:539.8px;top:595.85px;font-size:14px;line-height:14px;white-space:nowrap;color:#333;transform:scale(0.9987,1.0);transform-origin:0 11.85px;">17:30</div><svg style="position:absolute;left:416.29999999999995px;top:616.0px" width="16" height="16" viewBox="0 0 16 16"><circle cx="8" cy="8" r="6.9" fill="none" stroke="#5c5c5c" stroke-width="1.1"/><path d="M5 5L10.2 10.2M10.8 6.4V10.8H6.4" fill="none" stroke="#404040" stroke-width="1.5"/></svg><div style="position:absolute;left:440.7px;top:616.15px;font-size:14px;line-height:14px;white-space:nowrap;color:#fff;transform:scale(0.9946,1.0);transform-origin:0 11.85px;">03.09.2024</div><div style="position:absolute;left:643.6px;top:615.15px;font-size:14px;line-height:14px;white-space:nowrap;color:#fff;transform:scale(1.2281,1.14);transform-origin:0 11.85px;">ചൊവ്വാഴ്ച</div><div style="position:absolute;left:539.8px;top:635.85px;font-size:14px;line-height:14px;white-space:nowrap;color:#333;transform:scale(0.9987,1.0);transform-origin:0 11.85px;">09:00</div><div style="position:absolute;left:539.8px;top:655.85px;font-size:14px;line-height:14px;white-space:nowrap;color:#333;transform:scale(0.9987,1.0);transform-origin:0 11.85px;">09:30</div><div style="position:absolute;left:539.8px;top:675.85px;font-size:14px;line-height:14px;white-space:nowrap;color:#333;transform:scale(0.9987,1.0);transform-origin:0 11.85px;">10:00</div><div style="position:absolute;left:539.8px;top:695.85px;font-size:14px;line-height:14px;white-space:nowrap;color:#333;transform:scale(0.9987,1.0);transform-origin:0 11.85px;">10:30</div><div style="position:absolute;left:539.8px;top:715.85px;font-size:14px;line-height:14px;white-space:nowrap;color:#333;transform:scale(1.0294,1.0);transform-origin:0 11.85px;">11:00</div><div style="position:absolute;left:539.8px;top:735.85px;font-size:14px;line-height:14px;white-space:nowrap;color:#333;transform:scale(1.0294,1.0);transform-origin:0 11.85px;">11:30</div><div style="position:absolute;left:539.8px;top:755.85px;font-size:14px;line-height:14px;white-space:nowrap;color:#333;transform:scale(0.9987,1.0);transform-origin:0 11.85px;">12:00</div><div style="position:absolute;left:539.8px;top:775.85px;font-size:14px;line-height:14px;white-space:nowrap;color:#333;transform:scale(0.9987,1.0);transform-origin:0 11.85px;">12:30</div><div style="position:absolute;left:539.8px;top:795.85px;font-size:14px;line-height:14px;white-space:nowrap;color:#333;transform:scale(0.9987,1.0);transform-origin:0 11.85px;">13:00</div><div style="position:absolute;left:539.8px;top:815.85px;font-size:14px;line-height:14px;white-space:nowrap;color:#333;transform:scale(0.9987,1.0);transform-origin:0 11.85px;">13:30</div><div style="position:absolute;left:744.8px;top:166.5px;width:20px;height:663.5px;background:#fff"></div><div style="position:absolute;left:744.3px;top:167.3px;width:1px;height:663.1px;background:#c4c4c4"></div><svg style="position:absolute;left:751.5999999999999px;top:175.5px" width="7" height="4" viewBox="0 0 7 4"><path d="M0 4H7L3.5 0Z" fill="#777"/></svg><svg style="position:absolute;left:751.8px;top:817.7px" width="7" height="4" viewBox="0 0 7 4"><path d="M0 0H7L3.5 4Z" fill="#777"/></svg><div style="position:absolute;left:749.8px;top:187.2px;width:10.3px;height:487.4px;background:#b8b8b8"></div><div style="position:absolute;left:774.2px;top:165.3px;width:359.4px;height:666.2px;border:2px solid #bebebe;border-right:1px solid #c4c4c4;box-sizing:border-box;background:#fff"></div><div style="position:absolute;left:776.2px;top:167.3px;width:335.29999999999995px;height:31.7px;background:#f4f4f4"></div><div style="position:absolute;left:776.2px;top:199px;width:335.29999999999995px;height:1px;background:#c8c8c8"></div><div style="position:absolute;left:899.9px;top:177.60px;font-size:13px;line-height:13px;white-space:nowrap;color:#4e4e4e;transform:scale(1.1222,1.0);transform-origin:0 11.00px;">2. വെറ്റ് 1 (വെറ്റ്)</div><div style="position:absolute;left:776.2px;top:200px;width:335.29999999999995px;height:32.5px;background:#f4f4f4"></div><div style="position:absolute;left:776.2px;top:232px;width:335.29999999999995px;height:1.5px;background:#bdbdbd"></div><div style="position:absolute;left:906.8px;top:200px;width:1px;height:32px;background:#d0d0d0"></div><div style="position:absolute;left:956.2px;top:200px;width:1px;height:32px;background:#d0d0d0"></div><div style="position:absolute;left:1010.4px;top:200px;width:1px;height:32px;background:#d0d0d0"></div><div style="position:absolute;left:799.8000000000001px;top:211.25px;font-size:14px;line-height:14px;white-space:nowrap;color:#4e4e4e;transform:scale(1.3045,1.14);transform-origin:0 11.85px;">തീയതി</div><svg style="position:absolute;left:885.4000000000001px;top:216px" width="11" height="6" viewBox="0 0 11 6"><path d="M0 6H11L5.5 0Z" fill="#666"/></svg><div style="position:absolute;left:917.5px;top:211.25px;font-size:14px;line-height:14px;white-space:nowrap;color:#4e4e4e;transform:scale(0.9942,1.14);transform-origin:0 11.85px;">സ...</div><div style="position:absolute;left:978.5px;top:210.55px;font-size:14px;line-height:14px;white-space:nowrap;color:#333;transform:scale(1.0517,1.0);transform-origin:0 11.85px;">#</div><div style="position:absolute;left:1049.0px;top:211.25px;font-size:14px;line-height:14px;white-space:nowrap;color:#4e4e4e;transform:scale(1.3472,1.14);transform-origin:0 11.85px;">കക്ഷി</div><div style="position:absolute;left:776.2px;top:233.5px;width:335.29999999999995px;height:596.9px;overflow:hidden"><div style="position:absolute;left:0;top:0px;width:335.29999999999995px;height:20.5px;background:#d8effd"></div><div style="position:absolute;left:32.6px;top:0px;width:304.69999999999993px;height:20.5px;background:#0a7bc4;outline:1px dotted #f08030;outline-offset:-1px;"></div><div style="position:absolute;left:0;top:20.5px;width:335.29999999999995px;height:20px;background:#ddf9e1"></div><div style="position:absolute;left:0;top:40.5px;width:335.29999999999995px;height:20px;background:#d8effd"></div><div style="position:absolute;left:0;top:60.5px;width:335.29999999999995px;height:20px;background:#ddf9e1"></div><div style="position:absolute;left:0;top:80.5px;width:335.29999999999995px;height:20px;background:#d8effd"></div><div style="position:absolute;left:0;top:100.5px;width:335.29999999999995px;height:20px;background:#ddf9e1"></div><div style="position:absolute;left:0;top:120.5px;width:335.29999999999995px;height:20px;background:#d8effd"></div><div style="position:absolute;left:0;top:140.5px;width:335.29999999999995px;height:20px;background:#ddf9e1"></div><div style="position:absolute;left:0;top:160.5px;width:335.29999999999995px;height:20px;background:#d8effd"></div><div style="position:absolute;left:0;top:180.5px;width:335.29999999999995px;height:20px;background:#ddf9e1"></div><div style="position:absolute;left:0;top:200.5px;width:335.29999999999995px;height:20px;background:#d8effd"></div><div style="position:absolute;left:0;top:220.5px;width:335.29999999999995px;height:20px;background:#ddf9e1"></div><div style="position:absolute;left:0;top:240.5px;width:335.29999999999995px;height:20px;background:#d8effd"></div><div style="position:absolute;left:0;top:260.5px;width:335.29999999999995px;height:20px;background:#ddf9e1"></div><div style="position:absolute;left:0;top:280.5px;width:335.29999999999995px;height:20px;background:#d8effd"></div><div style="position:absolute;left:0;top:300.5px;width:335.29999999999995px;height:20px;background:#ddf9e1"></div><div style="position:absolute;left:0;top:320.5px;width:335.29999999999995px;height:20px;background:#d8effd"></div><div style="position:absolute;left:0;top:340.5px;width:335.29999999999995px;height:20px;background:#ddf9e1"></div><div style="position:absolute;left:0;top:360.5px;width:335.29999999999995px;height:20px;background:#d8effd"></div><div style="position:absolute;left:0;top:380.5px;width:335.29999999999995px;height:20px;background:#ddf9e1"></div><div style="position:absolute;left:32.6px;top:380.5px;width:304.69999999999993px;height:20px;background:#0a7bc4;"></div><div style="position:absolute;left:0;top:400.5px;width:335.29999999999995px;height:20px;background:#d8effd"></div><div style="position:absolute;left:0;top:420.5px;width:335.29999999999995px;height:20px;background:#ddf9e1"></div><div style="position:absolute;left:0;top:440.5px;width:335.29999999999995px;height:20px;background:#d8effd"></div><div style="position:absolute;left:0;top:460.5px;width:335.29999999999995px;height:20px;background:#ddf9e1"></div><div style="position:absolute;left:0;top:480.5px;width:335.29999999999995px;height:20px;background:#d8effd"></div><div style="position:absolute;left:0;top:500.5px;width:335.29999999999995px;height:20px;background:#ddf9e1"></div><div style="position:absolute;left:0;top:520.5px;width:335.29999999999995px;height:20px;background:#d8effd"></div><div style="position:absolute;left:0;top:540.5px;width:335.29999999999995px;height:20px;background:#ddf9e1"></div><div style="position:absolute;left:0;top:560.5px;width:335.29999999999995px;height:20px;background:#d8effd"></div><div style="position:absolute;left:0;top:580.5px;width:335.29999999999995px;height:20px;background:#ddf9e1"></div></div><svg style="position:absolute;left:784.1px;top:235.5px" width="16" height="16" viewBox="0 0 16 16"><circle cx="8" cy="8" r="6.9" fill="none" stroke="#5c5c5c" stroke-width="1.1"/><path d="M5 5L10.2 10.2M10.8 6.4V10.8H6.4" fill="none" stroke="#404040" stroke-width="1.5"/></svg><div style="position:absolute;left:808.5px;top:235.65px;font-size:14px;line-height:14px;white-space:nowrap;color:#22d8f0;transform:scale(0.9946,1.0);transform-origin:0 11.85px;">02.09.2024</div><div style="position:absolute;left:1011.4px;top:234.65px;font-size:14px;line-height:14px;white-space:nowrap;color:#22d8f0;transform:scale(1.2278,1.14);transform-origin:0 11.85px;">തിങ്കളാഴ്ച</div><div style="position:absolute;left:907.3px;top:255.85px;font-size:14px;line-height:14px;white-space:nowrap;color:#333;transform:scale(0.9987,1.0);transform-origin:0 11.85px;">09:00</div><div style="position:absolute;left:907.3px;top:275.85px;font-size:14px;line-height:14px;white-space:nowrap;color:#333;transform:scale(0.9987,1.0);transform-origin:0 11.85px;">09:30</div><div style="position:absolute;left:907.3px;top:295.85px;font-size:14px;line-height:14px;white-space:nowrap;color:#333;transform:scale(0.9987,1.0);transform-origin:0 11.85px;">10:00</div><div style="position:absolute;left:907.3px;top:315.85px;font-size:14px;line-height:14px;white-space:nowrap;color:#333;transform:scale(0.9987,1.0);transform-origin:0 11.85px;">10:30</div><div style="position:absolute;left:907.3px;top:335.85px;font-size:14px;line-height:14px;white-space:nowrap;color:#333;transform:scale(1.0294,1.0);transform-origin:0 11.85px;">11:00</div><div style="position:absolute;left:907.3px;top:354.0px;width:204.20000000000005px;height:20px;background:#fff9c4"></div><div style="position:absolute;left:956.7px;top:355.85px;font-size:14px;line-height:14px;white-space:nowrap;color:#333;transform:scale(0.9461,1.0);transform-origin:0 11.85px;">000081</div><div style="position:absolute;left:1011.4px;top:354.0px;width:100.10000000000002px;height:20px;overflow:hidden"><div style="position:absolute;left:0px;top:1.85px;font-size:14px;line-height:14px;white-space:nowrap;color:#4e4e4e;transform:scale(1.3381,1.14);transform-origin:0 11.85px;">ക്ലയൻ്റ്</div><div style="position:absolute;left:59.3px;top:1.85px;font-size:14px;line-height:14px;white-space:nowrap;color:#333;">2</div><div style="position:absolute;left:70.5px;top:1.85px;font-size:14px;line-height:14px;white-space:nowrap;color:#333;">-</div><div style="position:absolute;left:80.2px;top:1.85px;font-size:14px;line-height:14px;white-space:nowrap;color:#4e4e4e;transform:scale(1.0000,1.14);transform-origin:0 11.85px;">പൂച്ച</div></div><svg style="position:absolute;left:887.4000000000001px;top:359.0px" width="11" height="9" viewBox="0 0 11 9"><path d="M1 4.2 L4 7.6 L10 1" fill="none" stroke="#000" stroke-width="2.6"/></svg><div style="position:absolute;left:907.3px;top:355.85px;font-size:14px;line-height:14px;white-space:nowrap;color:#333;transform:scale(1.0294,1.0);transform-origin:0 11.85px;">11:30</div><div style="position:absolute;left:907.3px;top:375.85px;font-size:14px;line-height:14px;white-space:nowrap;color:#333;transform:scale(0.9987,1.0);transform-origin:0 11.85px;">12:00</div><div style="position:absolute;left:907.3px;top:394.0px;width:204.20000000000005px;height:20px;background:#fff9c4"></div><div style="position:absolute;left:956.7px;top:395.85px;font-size:14px;line-height:14px;white-space:nowrap;color:#333;transform:scale(0.9461,1.0);transform-origin:0 11.85px;">000084</div><div style="position:absolute;left:1011.4px;top:394.0px;width:100.10000000000002px;height:20px;overflow:hidden"><div style="position:absolute;left:0px;top:1.85px;font-size:14px;line-height:14px;white-space:nowrap;color:#4e4e4e;transform:scale(1.3381,1.14);transform-origin:0 11.85px;">ക്ലയൻ്റ്</div><div style="position:absolute;left:59.3px;top:1.85px;font-size:14px;line-height:14px;white-space:nowrap;color:#333;">5</div><div style="position:absolute;left:70.5px;top:1.85px;font-size:14px;line-height:14px;white-space:nowrap;color:#333;">-</div><div style="position:absolute;left:80.2px;top:1.85px;font-size:14px;line-height:14px;white-space:nowrap;color:#4e4e4e;transform:scale(1.0000,1.14);transform-origin:0 11.85px;">പൂച്ച</div></div><svg style="position:absolute;left:887.4000000000001px;top:399.0px" width="11" height="9" viewBox="0 0 11 9"><path d="M1 4.2 L4 7.6 L10 1" fill="none" stroke="#000" stroke-width="2.6"/></svg><div style="position:absolute;left:907.3px;top:395.85px;font-size:14px;line-height:14px;white-space:nowrap;color:#333;transform:scale(0.9987,1.0);transform-origin:0 11.85px;">12:30</div><div style="position:absolute;left:907.3px;top:415.85px;font-size:14px;line-height:14px;white-space:nowrap;color:#333;transform:scale(0.9987,1.0);transform-origin:0 11.85px;">13:00</div><div style="position:absolute;left:907.3px;top:435.85px;font-size:14px;line-height:14px;white-space:nowrap;color:#333;transform:scale(0.9987,1.0);transform-origin:0 11.85px;">13:30</div><div style="position:absolute;left:907.3px;top:455.85px;font-size:14px;line-height:14px;white-space:nowrap;color:#333;transform:scale(0.9987,1.0);transform-origin:0 11.85px;">14:00</div><div style="position:absolute;left:907.3px;top:475.85px;font-size:14px;line-height:14px;white-space:nowrap;color:#333;transform:scale(0.9987,1.0);transform-origin:0 11.85px;">14:30</div><div style="position:absolute;left:907.3px;top:495.85px;font-size:14px;line-height:14px;white-space:nowrap;color:#333;transform:scale(0.9987,1.0);transform-origin:0 11.85px;">15:00</div><div style="position:absolute;left:907.3px;top:515.85px;font-size:14px;line-height:14px;white-space:nowrap;color:#333;transform:scale(0.9987,1.0);transform-origin:0 11.85px;">15:30</div><div style="position:absolute;left:907.3px;top:535.85px;font-size:14px;line-height:14px;white-space:nowrap;color:#333;transform:scale(0.9987,1.0);transform-origin:0 11.85px;">16:00</div><div style="position:absolute;left:907.3px;top:555.85px;font-size:14px;line-height:14px;white-space:nowrap;color:#333;transform:scale(0.9987,1.0);transform-origin:0 11.85px;">16:30</div><div style="position:absolute;left:907.3px;top:575.85px;font-size:14px;line-height:14px;white-space:nowrap;color:#333;transform:scale(0.9987,1.0);transform-origin:0 11.85px;">17:00</div><div style="position:absolute;left:907.3px;top:595.85px;font-size:14px;line-height:14px;white-space:nowrap;color:#333;transform:scale(0.9987,1.0);transform-origin:0 11.85px;">17:30</div><svg style="position:absolute;left:784.1px;top:616.0px" width="16" height="16" viewBox="0 0 16 16"><circle cx="8" cy="8" r="6.9" fill="none" stroke="#5c5c5c" stroke-width="1.1"/><path d="M5 5L10.2 10.2M10.8 6.4V10.8H6.4" fill="none" stroke="#404040" stroke-width="1.5"/></svg><div style="position:absolute;left:808.5px;top:616.15px;font-size:14px;line-height:14px;white-space:nowrap;color:#fff;transform:scale(0.9946,1.0);transform-origin:0 11.85px;">03.09.2024</div><div style="position:absolute;left:1011.4px;top:615.15px;font-size:14px;line-height:14px;white-space:nowrap;color:#fff;transform:scale(1.2281,1.14);transform-origin:0 11.85px;">ചൊവ്വാഴ്ച</div><div style="position:absolute;left:907.3px;top:635.85px;font-size:14px;line-height:14px;white-space:nowrap;color:#333;transform:scale(0.9987,1.0);transform-origin:0 11.85px;">09:00</div><div style="position:absolute;left:907.3px;top:655.85px;font-size:14px;line-height:14px;white-space:nowrap;color:#333;transform:scale(0.9987,1.0);transform-origin:0 11.85px;">09:30</div><div style="position:absolute;left:907.3px;top:675.85px;font-size:14px;line-height:14px;white-space:nowrap;color:#333;transform:scale(0.9987,1.0);transform-origin:0 11.85px;">10:00</div><div style="position:absolute;left:907.3px;top:695.85px;font-size:14px;line-height:14px;white-space:nowrap;color:#333;transform:scale(0.9987,1.0);transform-origin:0 11.85px;">10:30</div><div style="position:absolute;left:907.3px;top:715.85px;font-size:14px;line-height:14px;white-space:nowrap;color:#333;transform:scale(1.0294,1.0);transform-origin:0 11.85px;">11:00</div><div style="position:absolute;left:907.3px;top:735.85px;font-size:14px;line-height:14px;white-space:nowrap;color:#333;transform:scale(1.0294,1.0);transform-origin:0 11.85px;">11:30</div><div style="position:absolute;left:907.3px;top:754.0px;width:204.20000000000005px;height:20px;background:#fff9c4"></div><div style="position:absolute;left:956.7px;top:755.85px;font-size:14px;line-height:14px;white-space:nowrap;color:#b01010;transform:scale(0.9461,1.0);transform-origin:0 11.85px;">000085</div><div style="position:absolute;left:1011.4px;top:754.0px;width:100.10000000000002px;height:20px;overflow:hidden"><div style="position:absolute;left:0px;top:1.85px;font-size:14px;line-height:14px;white-space:nowrap;color:#b01010;transform:scale(1.3381,1.14);transform-origin:0 11.85px;">ക്ലയൻ്റ്</div><div style="position:absolute;left:59.3px;top:1.85px;font-size:14px;line-height:14px;white-space:nowrap;color:#b01010;">6</div><div style="position:absolute;left:70.5px;top:1.85px;font-size:14px;line-height:14px;white-space:nowrap;color:#b01010;">-</div><div style="position:absolute;left:80.2px;top:1.85px;font-size:14px;line-height:14px;white-space:nowrap;color:#b01010;transform:scale(1.0000,1.14);transform-origin:0 11.85px;">നായ</div></div><svg style="position:absolute;left:840.0px;top:753.0px" width="24" height="22" viewBox="0 0 24 22"><path d="M4.5 5.5 Q6 15 17.5 19" fill="none" stroke="#000" stroke-width="5.2" stroke-linecap="round"/><rect x="5" y="2.5" width="7" height="4.2" rx="2" transform="rotate(40 8.5 4.5)" fill="#ff3b2a"/><rect x="15" y="12.9" width="7" height="4.4" rx="2" transform="rotate(50 18.6 15)" fill="#ff3b2a"/></svg><div style="position:absolute;left:907.3px;top:755.85px;font-size:14px;line-height:14px;white-space:nowrap;color:#b01010;transform:scale(0.9987,1.0);transform-origin:0 11.85px;">12:00</div><div style="position:absolute;left:907.3px;top:775.85px;font-size:14px;line-height:14px;white-space:nowrap;color:#333;transform:scale(0.9987,1.0);transform-origin:0 11.85px;">12:30</div><div style="position:absolute;left:907.3px;top:795.85px;font-size:14px;line-height:14px;white-space:nowrap;color:#333;transform:scale(0.9987,1.0);transform-origin:0 11.85px;">13:00</div><div style="position:absolute;left:907.3px;top:815.85px;font-size:14px;line-height:14px;white-space:nowrap;color:#333;transform:scale(0.9987,1.0);transform-origin:0 11.85px;">13:30</div><div style="position:absolute;left:1112.0px;top:166.5px;width:20px;height:663.5px;background:#fff"></div><div style="position:absolute;left:1111.5px;top:167.3px;width:1px;height:663.1px;background:#c4c4c4"></div><svg style="position:absolute;left:1118.8px;top:175.5px" width="7" height="4" viewBox="0 0 7 4"><path d="M0 4H7L3.5 0Z" fill="#777"/></svg><svg style="position:absolute;left:1119.0px;top:817.7px" width="7" height="4" viewBox="0 0 7 4"><path d="M0 0H7L3.5 4Z" fill="#777"/></svg><div style="position:absolute;left:1117.0px;top:187.2px;width:10.3px;height:487.4px;background:#b8b8b8"></div><div style="position:absolute;left:398.6px;top:840.7px;width:741.4px;height:1px;background:#fafafa"></div><div style="position:absolute;left:398.6px;top:841.7px;width:741.4px;height:18.4px;background:#f0f0f0"></div><svg style="position:absolute;left:404.8px;top:846.4px" width="8" height="9" viewBox="0 0 8 9"><path d="M7 0.5 L1.5 4.5 L7 8.5" fill="none" stroke="#555" stroke-width="2"/></svg><div style="position:absolute;left:420px;top:841.7px;width:469.5px;height:18.4px;background:#cdcdcd"></div><svg style="position:absolute;left:1125px;top:846.4px" width="8" height="9" viewBox="0 0 8 9"><path d="M1 0.5 L6.5 4.5 L1 8.5" fill="none" stroke="#555" stroke-width="2"/></svg><div style="position:absolute;left:21.7px;top:861.6px;width:1118.3px;height:1.2px;background:#cfcfcf"></div><div style="position:absolute;left:236.7px;top:865.2px;width:903.3px;height:1.2px;background:#cfcfcf"></div><div style="position:absolute;left:1139px;top:861.6px;width:1px;height:4.8px;background:#cfcfcf"></div><div style="position:absolute;left:21.7px;top:861.6px;width:215.5px;height:55.6px;border:1px solid #cfcfcf;border-bottom:none;box-sizing:border-box;background:#fff"></div><div style="position:absolute;left:22.2px;top:914.2px;width:215px;height:3px;background:#1ea0ea"></div><svg style="position:absolute;left:39.8px;top:877.4px" width="31" height="27" viewBox="0 0 31 27"><defs><linearGradient id="wg" x1="0" y1="0" x2="0" y2="1"><stop offset="0" stop-color="#f4f6fc"/><stop offset="1" stop-color="#dde3f3"/></linearGradient></defs><rect x="0.7" y="0.7" width="29.6" height="25.6" rx="2" fill="url(#wg)" stroke="#7e8fc8" stroke-width="1.3"/><rect x="1.3" y="1.3" width="28.4" height="4.5" fill="#6a9be0"/><circle cx="26" cy="3.5" r="1.2" fill="#e04040"/></svg><div style="position:absolute;left:83px;top:881.90px;font-size:15px;line-height:15px;white-space:nowrap;color:#1e90e0;transform:scale(1.2143,1.14);transform-origin:0 12.70px;">രജിസ്ട്രേഷൻ</div><svg style="position:absolute;left:204.6px;top:885.5px" width="11" height="10" viewBox="0 0 11 10"><path d="M1 1L10 9M10 1L1 9" stroke="#1e90e0" stroke-width="2"/></svg><svg style="position:absolute;left:29px;top:920.5px" width="19.4" height="19.4" viewBox="0 0 19.4 19.4"><circle cx="9.7" cy="9.7" r="9.5" fill="#3f78c0"/><circle cx="9.7" cy="5" r="1.6" fill="#fff"/><rect x="8.4" y="7.8" width="2.6" height="7.5" fill="#fff"/></svg><div style="position:absolute;left:70px;top:924.75px;font-size:14px;line-height:14px;white-space:nowrap;color:#333;transform:scale(0.9831,1.0);transform-origin:0 11.85px;">7.3.9061.10 Standard</div><div style="position:absolute;left:229.3px;top:921.5px;width:1px;height:18.5px;background:#c8c8c8"></div><div style="position:absolute;left:399px;top:921.5px;width:1px;height:18.5px;background:#c8c8c8"></div><div style="position:absolute;left:578.3px;top:921.5px;width:1px;height:18.5px;background:#c8c8c8"></div><div style="position:absolute;left:726.9px;top:921.5px;width:1px;height:18.5px;background:#c8c8c8"></div><div style="position:absolute;left:875.8px;top:921.5px;width:1px;height:18.5px;background:#c8c8c8"></div><div style="position:absolute;left:1109px;top:921.5px;width:1px;height:18.5px;background:#c8c8c8"></div><svg style="position:absolute;left:243px;top:920px" width="16" height="21" viewBox="0 0 16 21"><defs><linearGradient id="db" x1="0" y1="0" x2="1" y2="0"><stop offset="0" stop-color="#d98a20"/><stop offset=".5" stop-color="#ffe0a0"/><stop offset="1" stop-color="#d98a20"/></linearGradient></defs><rect x="1" y="1" width="14" height="19" rx="4" fill="url(#db)" stroke="#b87020" stroke-width=".8"/><path d="M1 7 Q8 10 15 7 M1 13 Q8 16 15 13" fill="none" stroke="#b87020" stroke-width=".8"/></svg><div style="position:absolute;left:281.5px;top:924.75px;font-size:14px;line-height:14px;white-space:nowrap;color:#333;transform:scale(0.9910,1.0);transform-origin:0 11.85px;">localhost (utf8)</div><svg style="position:absolute;left:411.7px;top:920.5px" width="18" height="18" viewBox="0 0 18 18"><svg viewBox="0 0 18 18" width="18" height="18"><defs><linearGradient id="pb" x1="0" y1="0" x2="0" y2="1"><stop offset="0" stop-color="#a8d860"/><stop offset="1" stop-color="#6aa830"/></linearGradient></defs><path d="M0.8 15.8 Q1 11.6 6 11 L12 11 Q17 11.6 17.2 15.8 Q17 17.6 9 17.6 Q1 17.6 0.8 15.8Z" fill="url(#pb)" stroke="#5a8a30" stroke-width=".5"/><path d="M4.6 9 Q3.6 0.6 9 0.6 Q14.4 0.6 13.4 9 Q12.6 11.6 11.5 12 L6.5 12 Q5.4 11.6 4.6 9Z" fill="#c0783f"/><path d="M6.2 5 Q9 3.6 11.8 5 L11.6 9 Q10.6 12.4 9 12.4 Q7.4 12.4 6.4 9Z" fill="#f6d2a8"/></svg></svg><div style="position:absolute;left:451px;top:924.75px;font-size:14px;line-height:14px;white-space:nowrap;color:#333;transform:scale(0.9245,1.0);transform-origin:0 11.85px;">NIKOLAY (MAIN)</div><svg style="position:absolute;left:591.4px;top:921px" width="18" height="19" viewBox="0 0 18 19"><rect x="0.6" y="0.6" width="16.8" height="17.8" fill="#fff" stroke="#6a7ab8" stroke-width="1.2"/><rect x="0.6" y="0.6" width="16.8" height="4.5" fill="#e05050"/><text x="9" y="16" font-family="Liberation Sans" font-weight="bold" font-size="10" fill="#223" text-anchor="middle">31</text></svg><div style="position:absolute;left:630.6px;top:924.75px;font-size:14px;line-height:14px;white-space:nowrap;color:#333;transform:scale(1.0003,1.0);transform-origin:0 11.85px;">02.09.2024</div><div style="position:absolute;left:762.9px;top:924.75px;font-size:14px;line-height:14px;white-space:nowrap;color:#000;transform:scale(0.9920,1.0);transform-origin:0 11.85px;">15:47:45:831</div><svg style="position:absolute;left:1123.6px;top:927.2px" width="15" height="14" viewBox="0 0 15 14"><path d="M12 -0.6000000000000001V2.6M10.4 1H13.6" stroke="#666" stroke-width="1.2"/><path d="M7 4.4V7.6M5.4 6H8.6" stroke="#666" stroke-width="1.2"/><path d="M12 4.4V7.6M10.4 6H13.6" stroke="#666" stroke-width="1.2"/><path d="M2 9.4V12.6M0.3999999999999999 11H3.6" stroke="#666" stroke-width="1.2"/><path d="M7 9.4V12.6M5.4 11H8.6" stroke="#666" stroke-width="1.2"/><path d="M12 9.4V12.6M10.4 11H13.6" stroke="#666" stroke-width="1.2"/></svg>
<div style="position:absolute;left:31.20px;top:198.5px;writing-mode:vertical-rl;font-size:13px;line-height:13px;white-space:nowrap;color:#5a5a70;transform:scaleY(1.0424);transform-origin:0 0;">ജീവനക്കാരുടെ പട്ടിക</div><div style="position:absolute;left:31.70px;top:377.7px;writing-mode:vertical-rl;font-size:13px;line-height:13px;white-space:nowrap;color:#5a5a70;transform:scaleY(1.2243);transform-origin:0 0;">സാങ്കേതിക സഹായം</div>
</body></html>
